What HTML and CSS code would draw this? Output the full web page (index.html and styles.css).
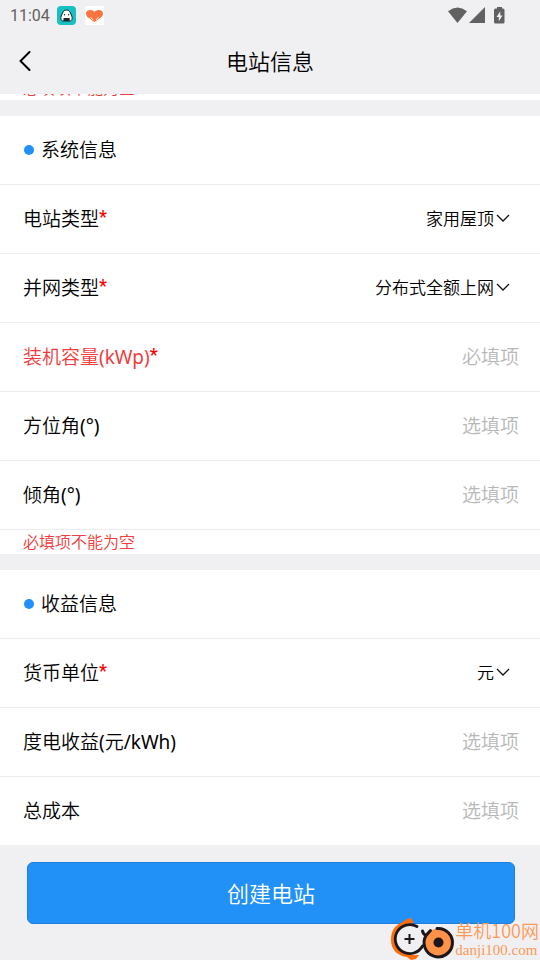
FILE: index.html
```html
<!DOCTYPE html>
<html lang="zh-CN">
<head>
<meta charset="utf-8">
<meta name="viewport" content="width=device-width, initial-scale=1">
<title>电站信息</title>
<link rel="stylesheet" href="styles.css">
</head>
<body>
<div class="status">
  <span class="clock">11:04</span>
  <svg class="app" viewBox="0 0 19 19" aria-hidden="true">
    <rect width="19" height="19" rx="4" fill="#15c1c3"/>
    <path d="M9.500 4C7.500 4 6.500 5 5.500 7L4.200 10c-.9 2.500-.2 4.600 1.500 5h7.600c1.700-.4 2.400-2.500 1.500-5L13.500 7C12.500 5 11.500 4 9.500 4Z" fill="#fff" stroke="#18272a" stroke-width="1"/>
    <path d="M6.500 12h6.200V15H6.500Z" fill="#18272a"/>
    <circle cx="7.500" cy="8.800" r=".7" fill="#18272a"/><circle cx="11.600" cy="8.800" r=".7" fill="#18272a"/>
  </svg>
  <svg class="app" viewBox="0 0 19 19" aria-hidden="true">
    <rect width="19" height="19" rx="2" fill="#fff"/>
    <path d="M9.500 16C5.500 14 1 11 1 7.600 1 5 3.500 4 5.300 4c2 0 3.400 1 4.200 1.800C10.300 5 11.700 4 13.700 4 15.500 4 18 5 18 7.600c0 3.400-4.500 6.400-8.500 8.400Z" fill="#f9743f"/>
    <path d="M3 12q4 1 5 5.500M16 12q-4 1-5 5.500M5.500 11l2.500 3M13.500 11l-2.500 3" fill="none" stroke="#ffeadc" stroke-width="1"/>
  </svg>
  <span class="spacer"></span>
  <svg class="signals" viewBox="0 0 57 18" aria-hidden="true" fill="#616161">
    <path d="M0 4.200Q9.500-3 19 4.200L9.500 16Z"/>
    <path d="M37 0v16H21Z"/>
    <path d="M49 0h5v1.500h1q1.500 0 1.500 1.500v12q0 1.500-1.500 1.500h-7.500q-1.500 0-1.500-1.500V3q0-1.500 1.500-1.500H49Z"/>
    <path d="M52.300 4.200 48.500 10h2.300v4.300L54.500 8.500h-2.200Z" fill="#f0f0f3"/>
  </svg>
</div>
<header class="nav">
  <button class="back" type="button" aria-label="返回">
    <svg viewBox="0 0 12 20" aria-hidden="true"><path d="M10.500 1 1.500 10l9 9" fill="none" stroke="#000" stroke-width="2" stroke-linecap="round" stroke-linejoin="round"/></svg>
  </button>
  <h1 class="title">电站信息</h1>
</header>
<form class="form">
  <div class="card clipped"><p class="error">必填项不能为空</p></div>

  <section class="card">
    <h2 class="row heading">系统信息</h2>
    <div class="row">
      <label for="type">电站类型<b class="star">*</b></label>
      <select id="type" class="picker"><option>家用屋顶</option></select>
      <svg class="chevron" viewBox="0 0 14 8" aria-hidden="true"><path d="M1 1l6 6 6-6"/></svg>
    </div>
    <div class="row">
      <label for="grid">并网类型<b class="star">*</b></label>
      <select id="grid" class="picker"><option>分布式全额上网</option></select>
      <svg class="chevron" viewBox="0 0 14 8" aria-hidden="true"><path d="M1 1l6 6 6-6"/></svg>
    </div>
    <div class="row invalid">
      <label for="capacity">装机容量<span class="unit">(kWp)</span><b class="star">*</b></label>
      <input id="capacity" class="entry" type="text" placeholder="必填项">
    </div>
    <div class="row">
      <label for="azimuth">方位角<span class="unit">(°)</span></label>
      <input id="azimuth" class="entry" type="text" placeholder="选填项">
    </div>
    <div class="row">
      <label for="tilt">倾角<span class="unit">(°)</span></label>
      <input id="tilt" class="entry" type="text" placeholder="选填项">
    </div>
    <p class="error">必填项不能为空</p>
  </section>

  <section class="card">
    <h2 class="row heading">收益信息</h2>
    <div class="row">
      <label for="currency">货币单位<b class="star">*</b></label>
      <select id="currency" class="picker"><option>元</option></select>
      <svg class="chevron" viewBox="0 0 14 8" aria-hidden="true"><path d="M1 1l6 6 6-6"/></svg>
    </div>
    <div class="row">
      <label for="income">度电收益<span class="unit">(</span>元<span class="unit">/kWh)</span></label>
      <input id="income" class="entry" type="text" placeholder="选填项">
    </div>
    <div class="row">
      <label for="cost">总成本</label>
      <input id="cost" class="entry" type="text" placeholder="选填项">
    </div>
  </section>

  <div class="actions"><button class="submit" type="submit">创建电站</button></div>
</form>
<div class="mark">
  <svg class="mark-logo" viewBox="0 0 64 42" aria-hidden="true">
    <path d="M21 2 20 0Q16 0 12 4 0 8 0 22c0 10 7 16 16 17l4 3 5-1 3-4C14 38 4 32 4 22 4 12 11 7 17 6l6-1Z" fill="#ff6d0a"/>
    <circle cx="18.500" cy="21" r="14.500" fill="#f0f0f3"/>
    <path d="M26 8.500A14.500 14.500 0 1 0 31.500 28" fill="none" stroke="#1d1719" stroke-width="2.800" stroke-linecap="round"/>
    <path d="M18.500 16v10M13.500 21h10" stroke="#1d1719" stroke-width="2"/>
    <circle cx="47.500" cy="24.500" r="14" fill="#ff9148"/>
    <path d="M46 10.500A14.200 14.200 0 1 1 35 17.500L39.500 12.500M35 17.500Q32 16 31.500 13" fill="none" stroke="#1d1719" stroke-width="3" stroke-linecap="round"/>
    <circle cx="47.500" cy="24.500" r="5" fill="#1d1719"/>
  </svg>
  <div class="mark-text"><span class="mark-name">单机100网</span><span class="mark-site">danji100.com</span></div>
</div>
</body>
</html>
```
FILE: styles.css
```css
* { box-sizing: border-box; }

body {
  margin: 0;
  min-height: 100vh;
  position: relative;
  background: #f0f0f3;
  color: #000;
  font: 350 19px/28px "Noto Sans", "Noto Sans CJK SC", sans-serif;
}

h1, h2, p { margin: 0; font-weight: inherit; }

button, input, select { font: inherit; color: inherit; }

.status {
  display: flex;
  align-items: center;
  height: 31px;
  padding: 0 35px 0 10px;
}
.clock {
  margin-right: 7px;
  color: #616161;
  font: 400 16px/20px Roboto, sans-serif;
}
.app { width: 19px; height: 19px; margin-right: 9px; }
.spacer { flex: 1; }
.signals { width: 57px; height: 18px; }

.nav {
  display: grid;
  grid-template-columns: 50px 1fr 50px;
  align-items: center;
  height: 63px;
  padding-bottom: 3px;
}
.back {
  display: flex;
  padding: 0 0 0 19px;
  border: 0;
  background: none;
}
.back svg { width: 12px; height: 20px; }
.title { font-size: 22px; text-align: center; }

.form { display: flex; flex-direction: column; gap: 16px; }

.card { background: #fff; }

.clipped {
  display: flex;
  align-items: flex-end;
  height: 6px;
  overflow: hidden;
}

.row {
  display: flex;
  align-items: center;
  height: 69px;
  padding: 0 21px 0 23px;
  border-bottom: 1px solid #ececee;
}
.row:last-child { height: 68px; border-bottom: 0; }

.heading { gap: 7px; font-size: 19px; }
.heading::before {
  content: "";
  width: 10px;
  height: 10px;
  margin-left: 1px;
  border-radius: 50%;
  background: #2190f7;
}

.unit { font-weight: 400; }
.star {
  color: #f00;
  font: 500 18px/20px Roboto, sans-serif;
  vertical-align: 3px;
}
.invalid label { color: #f03c3c; }

.entry {
  flex: 1;
  min-width: 0;
  padding: 0;
  border: 0;
  outline: 0;
  background: none;
  text-align: right;
}
.entry::placeholder { color: #b8b8b8; opacity: 1; }

.picker {
  flex: 1;
  min-width: 0;
  padding: 0;
  border: 0;
  background: none;
  appearance: none;
  font-size: 17px;
  text-align: right;
  text-align-last: right;
}
.chevron {
  width: 14px;
  height: 8px;
  margin: 0 9px 2px 2px;
  fill: none;
  stroke: #111;
  stroke-width: 1.3;
}

.error {
  padding-left: 23px;
  color: #f03c3c;
  font-size: 16px;
  line-height: 24px;
}

.actions { padding: 1px 25px 36px 27px; }
.submit {
  width: 100%;
  height: 62px;
  border: 1px solid #1c80dc;
  border-radius: 6px;
  background: #2190f7;
  color: #fff;
  font-size: 22px;
}

.mark {
  position: absolute;
  right: 1px;
  bottom: 0;
  display: flex;
  align-items: center;
}
.mark-logo { width: 64px; height: 42px; }
.mark-text {
  display: flex;
  flex-direction: column;
  color: #ff9955;
}
.mark-name { font: 350 18px/22px "Noto Sans CJK SC", sans-serif; }
.mark-site { font: 400 15px/18px "Liberation Serif", serif; }
```
